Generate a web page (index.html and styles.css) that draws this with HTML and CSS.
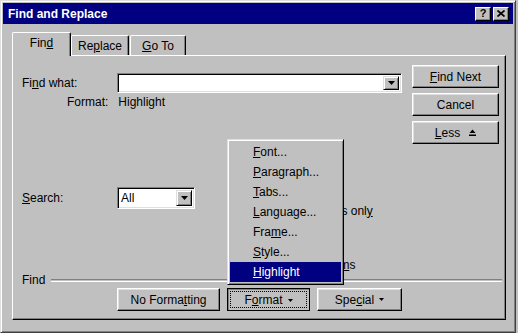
FILE: index.html
```html
<!DOCTYPE html>
<html lang="en">
<head>
  <meta charset="UTF-8">
  <title>Find and Replace</title>
  <link rel="stylesheet" href="styles.css">
</head>
<body>
  <div class="window">
    <div class="titlebar">
      <span class="title">Find and Replace</span>
      <div class="caption-btns">
        <div class="cap-btn help">?</div>
        <div class="cap-btn">
          <svg width="8" height="7" viewBox="0 0 8 7"><path d="M0.5 0.5 L7.5 6.5 M7.5 0.5 L0.5 6.5" stroke="#000" stroke-width="1.7"/></svg>
        </div>
      </div>
    </div>

    <div class="tabs">
      <div class="tab active">Fin<u>d</u></div>
      <div class="tab">Re<u>p</u>lace</div>
      <div class="tab"><u>G</u>o To</div>
    </div>

    <div class="panel">
      <div class="top-area">
        <div class="fields">
          <div class="field-row">
            <span class="lbl">Fi<u>n</u>d what:</span>
            <div class="combo wide">
              <span class="combo-text"></span>
              <span class="drop-btn"><svg width="7" height="4" viewBox="0 0 7 4"><path d="M0 0 H7 L3.5 4 Z" fill="#000"/></svg></span>
            </div>
          </div>
          <div class="format-row">
            <span class="fmt-lbl">Format:</span>
            <span>Highlight</span>
          </div>
        </div>
        <div class="side-btns">
          <div class="btn"><span><u>F</u>ind Next</span></div>
          <div class="btn"><span>Cancel</span></div>
          <div class="btn"><span><u>L</u>ess</span>
            <svg class="less-icon" width="7" height="8" viewBox="0 0 7 8"><path d="M3.5 0.5 L6.5 4 H0.5 Z" fill="#000"/><rect x="0" y="5.5" width="7" height="1.5" fill="#000"/></svg>
          </div>
        </div>
      </div>

      <div class="mid-area">
        <div class="search">
          <span class="lbl"><u>S</u>earch:</span>
          <div class="combo narrow">
            <span class="combo-text">All</span>
            <span class="drop-btn"><svg width="7" height="4" viewBox="0 0 7 4"><path d="M0 0 H7 L3.5 4 Z" fill="#000"/></svg></span>
          </div>
        </div>
        <div class="options">
          <div class="check"><span class="box"></span><span>Match <u>c</u>ase</span></div>
          <div class="check"><span class="box"></span><span>Find whole words onl<u>y</u></span></div>
          <div class="check"><span class="box"></span><span>Use wildcards</span></div>
          <div class="check"><span class="box"></span><span>Sounds like</span></div>
          <div class="check"><span class="box"></span><span>Find all word for<u>m</u>s</span></div>
        </div>
      </div>

      <div class="sep">
        <span>Find</span>
        <span class="line"></span>
      </div>

      <div class="bottom-btns">
        <div class="btn no-fmt"><span>No Forma<u>t</u>ting</span></div>
        <div class="btn format pressed"><span class="focus">F<u>o</u>rmat<svg class="tri" width="5" height="3" viewBox="0 0 5 3"><path d="M0 0 H5 L2.5 3 Z" fill="#000"/></svg></span></div>
        <div class="btn special"><span>Spe<u>c</u>ial<svg class="tri" width="5" height="3" viewBox="0 0 5 3"><path d="M0 0 H5 L2.5 3 Z" fill="#000"/></svg></span></div>
      </div>

      <!-- Format dropdown menu -->
      <div class="menu">
        <div class="menu-item"><u>F</u>ont...</div>
        <div class="menu-item"><u>P</u>aragraph...</div>
        <div class="menu-item"><u>T</u>abs...</div>
        <div class="menu-item"><u>L</u>anguage...</div>
        <div class="menu-item">Fra<u>m</u>e...</div>
        <div class="menu-item"><u>S</u>tyle...</div>
        <div class="menu-item selected"><u>H</u>ighlight</div>
      </div>
    </div>
  </div>
</body>
</html>
```

FILE: styles.css
```css
body {
  margin: 0;
  background-color: #c0c0c0;
  font-family: "Liberation Sans", Arial, sans-serif;
  font-size: 12px;
  color: #000;
}

u {
  text-decoration-thickness: 1px;
  text-underline-offset: 1px;
}

.window {
  width: 516px;
  height: 333px;
  box-sizing: border-box;
  background-color: #c0c0c0;
  border: 1px solid;
  border-color: #dfdfdf #404040 #404040 #dfdfdf;
  box-shadow: inset 1px 1px #fff, inset -1px -1px #808080;
  padding: 2px;
  display: flex;
  flex-direction: column;
}

.titlebar {
  height: 21px;
  background-color: #000080;
  color: #fff;
  display: flex;
  align-items: center;
  justify-content: space-between;
  padding: 0 4px 0 5px;
}

.title {
  font-weight: bold;
  font-size: 12px;
}

.caption-btns {
  display: flex;
  gap: 2px;
}

.cap-btn {
  width: 16px;
  height: 14px;
  box-sizing: border-box;
  background-color: #c0c0c0;
  border: 1px solid;
  border-color: #fff #000 #000 #fff;
  box-shadow: inset -1px -1px #808080;
  display: flex;
  align-items: center;
  justify-content: center;
  color: #000;
}

.cap-btn.help {
  font-weight: bold;
  font-size: 11px;
  line-height: 1;
}

/* tabs */
.tabs {
  height: 31px;
  display: flex;
  align-items: flex-end;
  padding-left: 9px;
}

.tab {
  height: 20px;
  box-sizing: border-box;
  border-top: 1px solid #fff;
  border-left: 1px solid #fff;
  border-right: 1px solid #000;
  box-shadow: inset -1px 0 #808080;
  border-radius: 2px 2px 0 0;
  display: flex;
  align-items: center;
  justify-content: center;
}

.tab:nth-child(2) {
  width: 58px;
}

.tab:nth-child(3) {
  width: 56px;
  margin-left: 1px;
}

.tab.active {
  width: 59px;
  height: 24px;
  margin-bottom: -1px;
  background-color: #c0c0c0;
  position: relative;
  z-index: 1;
  padding-bottom: 3px;
}

/* tab panel */
.panel {
  position: relative;
  margin-left: 9px;
  width: 494px;
  height: 265px;
  box-sizing: border-box;
  border: 1px solid;
  border-color: #fff #000 #000 #fff;
  box-shadow: inset -1px -1px #808080;
  padding: 9px 6px 0 9px;
  display: flex;
  flex-direction: column;
}

.top-area {
  height: 119px;
  display: flex;
  justify-content: space-between;
}

.fields {
  width: 380px;
}

.field-row {
  margin-top: 8px;
  display: flex;
  align-items: center;
}

.lbl {
  width: 95px;
}

.combo {
  box-sizing: border-box;
  background-color: #fff;
  border: 1px solid;
  border-color: #808080 #fff #fff #808080;
  box-shadow: inset 1px 1px #000, inset -1px -1px #dfdfdf;
  padding: 2px;
  display: flex;
  align-items: stretch;
}

.combo.wide {
  width: 285px;
  height: 20px;
}

.combo.narrow {
  width: 78px;
  height: 22px;
}

.combo-text {
  flex: 1;
  padding-left: 1px;
  display: flex;
  align-items: center;
}

.drop-btn {
  width: 16px;
  box-sizing: border-box;
  background-color: #c0c0c0;
  border: 1px solid;
  border-color: #dfdfdf #000 #000 #dfdfdf;
  box-shadow: inset 1px 1px #fff, inset -1px -1px #808080;
  display: flex;
  align-items: center;
  justify-content: center;
}

.format-row {
  margin-top: 2px;
  height: 14px;
  line-height: 14px;
  padding-left: 45px;
  display: flex;
}

.fmt-lbl {
  margin-right: 10px;
}

.side-btns {
  width: 87px;
  display: flex;
  flex-direction: column;
  gap: 5px;
}

.btn {
  height: 23px;
  box-sizing: border-box;
  background-color: #c0c0c0;
  border: 1px solid;
  border-color: #fff #000 #000 #fff;
  box-shadow: inset -1px -1px #808080, inset 1px 1px #dfdfdf;
  display: flex;
  align-items: center;
  justify-content: center;
}

.less-icon {
  margin-left: 9px;
}

.tri {
  margin-left: 5px;
  vertical-align: 3px;
}

/* search + options */
.mid-area {
  height: 89px;
  display: flex;
  align-items: flex-start;
}

.search {
  margin-top: 3px;
  display: flex;
  align-items: center;
}

.options {
  margin-left: 40px;
  display: flex;
  flex-direction: column;
}

.check {
  height: 18px;
  display: flex;
  align-items: center;
  gap: 6px;
  white-space: nowrap;
}

.box {
  width: 13px;
  height: 13px;
  box-sizing: border-box;
  background-color: #fff;
  border: 1px solid;
  border-color: #808080 #fff #fff #808080;
  box-shadow: inset 1px 1px #000;
}

.sep {
  height: 14px;
  display: flex;
  align-items: center;
  gap: 6px;
  margin-right: -3px;
}

.sep .line {
  flex: 1;
  height: 1px;
  border-top: 1px solid #808080;
  border-bottom: 1px solid #fff;
}

.bottom-btns {
  margin-top: 1px;
  padding-left: 95px;
  display: flex;
  gap: 7px;
}

.no-fmt {
  width: 103px;
}

.format {
  width: 83px;
}

.special {
  width: 85px;
}

.btn.pressed {
  border-color: #000;
  box-shadow: inset 1px 1px #808080;
  padding: 3px;
}

.btn.pressed .focus {
  flex: 1;
  align-self: stretch;
  display: flex;
  align-items: center;
  justify-content: center;
  outline: 1px dotted #000;
  padding-top: 1px;
}

.btn.pressed .focus .tri {
  vertical-align: 0;
}

/* dropdown menu over the panel */
.menu {
  position: absolute;
  left: 214px;
  top: 83px;
  width: 117px;
  height: 146px;
  box-sizing: border-box;
  background-color: #c0c0c0;
  border: 1px solid;
  border-color: #dfdfdf #000 #000 #dfdfdf;
  box-shadow: inset 1px 1px #fff, inset -1px -1px #808080;
  padding: 2px;
  z-index: 2;
}

.menu-item {
  height: 20px;
  line-height: 20px;
  padding-left: 23px;
}

.menu-item.selected {
  background-color: #000080;
  color: #fff;
}
```
